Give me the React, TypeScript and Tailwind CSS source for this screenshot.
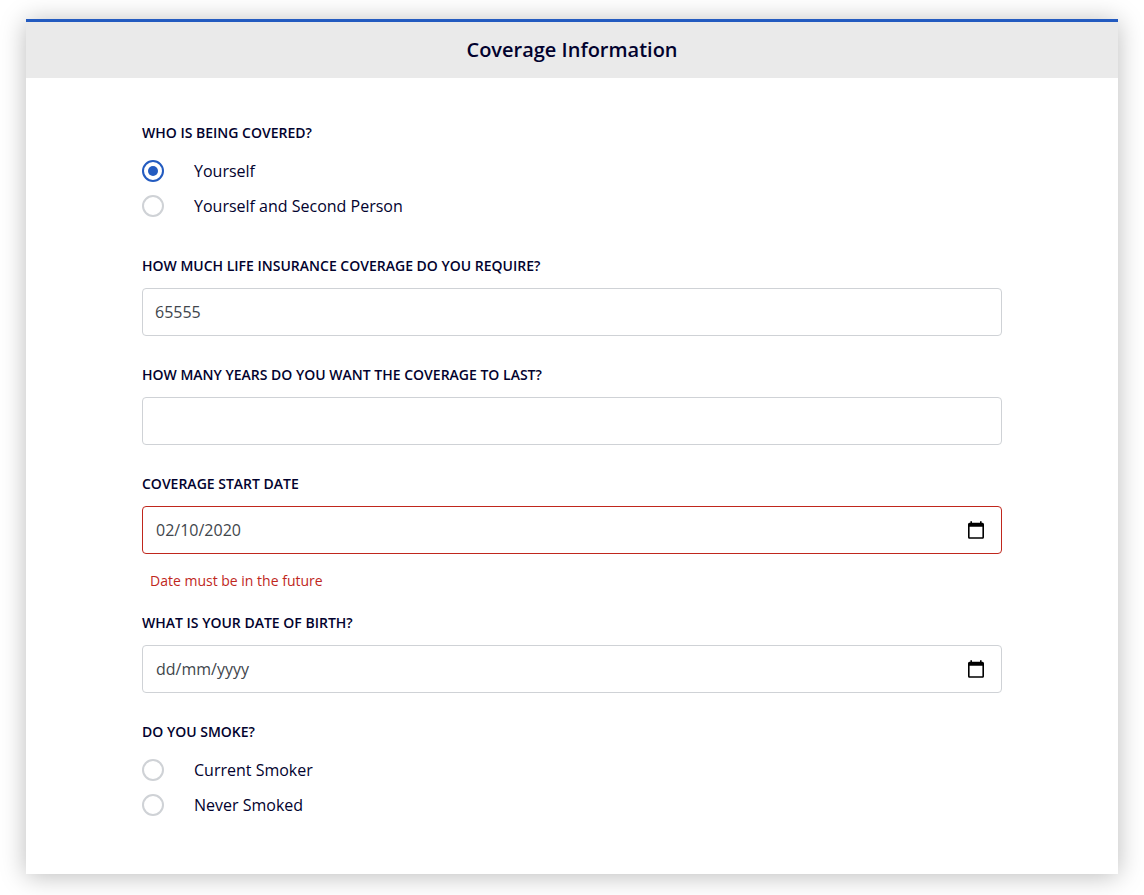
import { useState } from 'react';
import type { ReactNode } from 'react';

const labelClass = 'block text-sm/5 font-semibold uppercase';
const boxClass = 'h-12 w-full rounded-[4px] border bg-white';

function RadioGroup({ legend, name, options, initial }: { legend: string; name: string; options: string[]; initial?: string }) {
  const [selected, setSelected] = useState(initial);
  return (
    <fieldset>
      <legend className={labelClass}>{legend}</legend>
      <div className="mt-4 flex flex-col items-start gap-[11px]">
        {options.map((option) => (
          <label key={option} className="flex items-center gap-[30px] text-base/6">
            <input
              type="radio"
              name={name}
              value={option}
              checked={selected === option}
              onChange={() => setSelected(option)}
              className="size-[22px] shrink-0 appearance-none rounded-full border-2 border-[#cfd2d6] bg-white bg-clip-content p-1 checked:border-[#235bc0] checked:bg-[#235bc0]"
            />
            {option}
          </label>
        ))}
      </div>
    </fieldset>
  );
}

function Field({ id, label, children }: { id: string; label: string; children: ReactNode }) {
  return (
    <div>
      <label htmlFor={id} className={labelClass}>
        {label}
      </label>
      <div className="mt-3">{children}</div>
    </div>
  );
}

function DateInput({ id, value, error }: { id: string; value?: string; error?: string }) {
  return (
    <>
      <div className={`${boxClass} flex items-center pr-[17px] pl-[13px] ${error ? 'border-[#c0271d]' : 'border-[#cfd2d6]'}`}>
        <input
          id={id}
          type="text"
          inputMode="numeric"
          placeholder="dd/mm/yyyy"
          defaultValue={value}
          aria-invalid={error ? true : undefined}
          aria-describedby={error ? `${id}-error` : undefined}
          className="h-full min-w-0 flex-1 text-base/6 text-[#41464c] outline-none placeholder:text-[#41464c]"
        />
        <button type="button" aria-label="Open calendar" className="shrink-0 text-black">
          <svg viewBox="2 1 20 22" className="h-[18px] w-4" fill="currentColor" aria-hidden="true">
            <path d="M20 3h-1V1h-2v2H7V1H5v2H4c-1.1 0-2 .9-2 2v16c0 1.1.9 2 2 2h16c1.1 0 2-.9 2-2V5c0-1.100-.9-2-2-2zm0 18H4V8h16v13z" />
          </svg>
        </button>
      </div>
      {error && (
        <p id={`${id}-error`} className="mt-[17px] pl-2 text-sm/5 text-[#c0271d]">
          {error}
        </p>
      )}
    </>
  );
}

export default function App() {
  const textClass = `${boxClass} block border-[#cfd2d6] px-3 text-base/6 text-[#41464c]`;
  return (
    <main className="bg-white px-[26px] pt-[19px] pb-[21px] font-['Open_Sans','Noto_Sans',sans-serif] text-[#02022e]">
      <form className="border-t-3 border-[#235bc0] bg-white shadow-[0_2px_24px_rgba(0,0,0,0.27)]">
        <h1 className="bg-[#eaeaea] py-3.5 text-center text-xl/7 font-semibold">Coverage Information</h1>
        <div className="px-[116px] pt-[45px] pb-[57px]">
          <RadioGroup legend="Who is being covered?" name="covered" options={['Yourself', 'Yourself and Second Person']} initial="Yourself" />
          <div className="mt-[38px] flex flex-col gap-[29px]">
            <Field id="amount" label="How much life insurance coverage do you require?">
              <input id="amount" type="text" inputMode="numeric" defaultValue="65555" className={textClass} />
            </Field>
            <Field id="years" label="How many years do you want the coverage to last?">
              <input id="years" type="text" inputMode="numeric" className={textClass} />
            </Field>
            <div className="flex flex-col gap-[22px]">
              <Field id="start" label="Coverage start date">
                <DateInput id="start" value="02/10/2020" error="Date must be in the future" />
              </Field>
              <Field id="birth" label="What is your date of birth?">
                <DateInput id="birth" />
              </Field>
            </div>
            <RadioGroup legend="Do you smoke?" name="smoker" options={['Current Smoker', 'Never Smoked']} />
          </div>
        </div>
      </form>
    </main>
  );
}
